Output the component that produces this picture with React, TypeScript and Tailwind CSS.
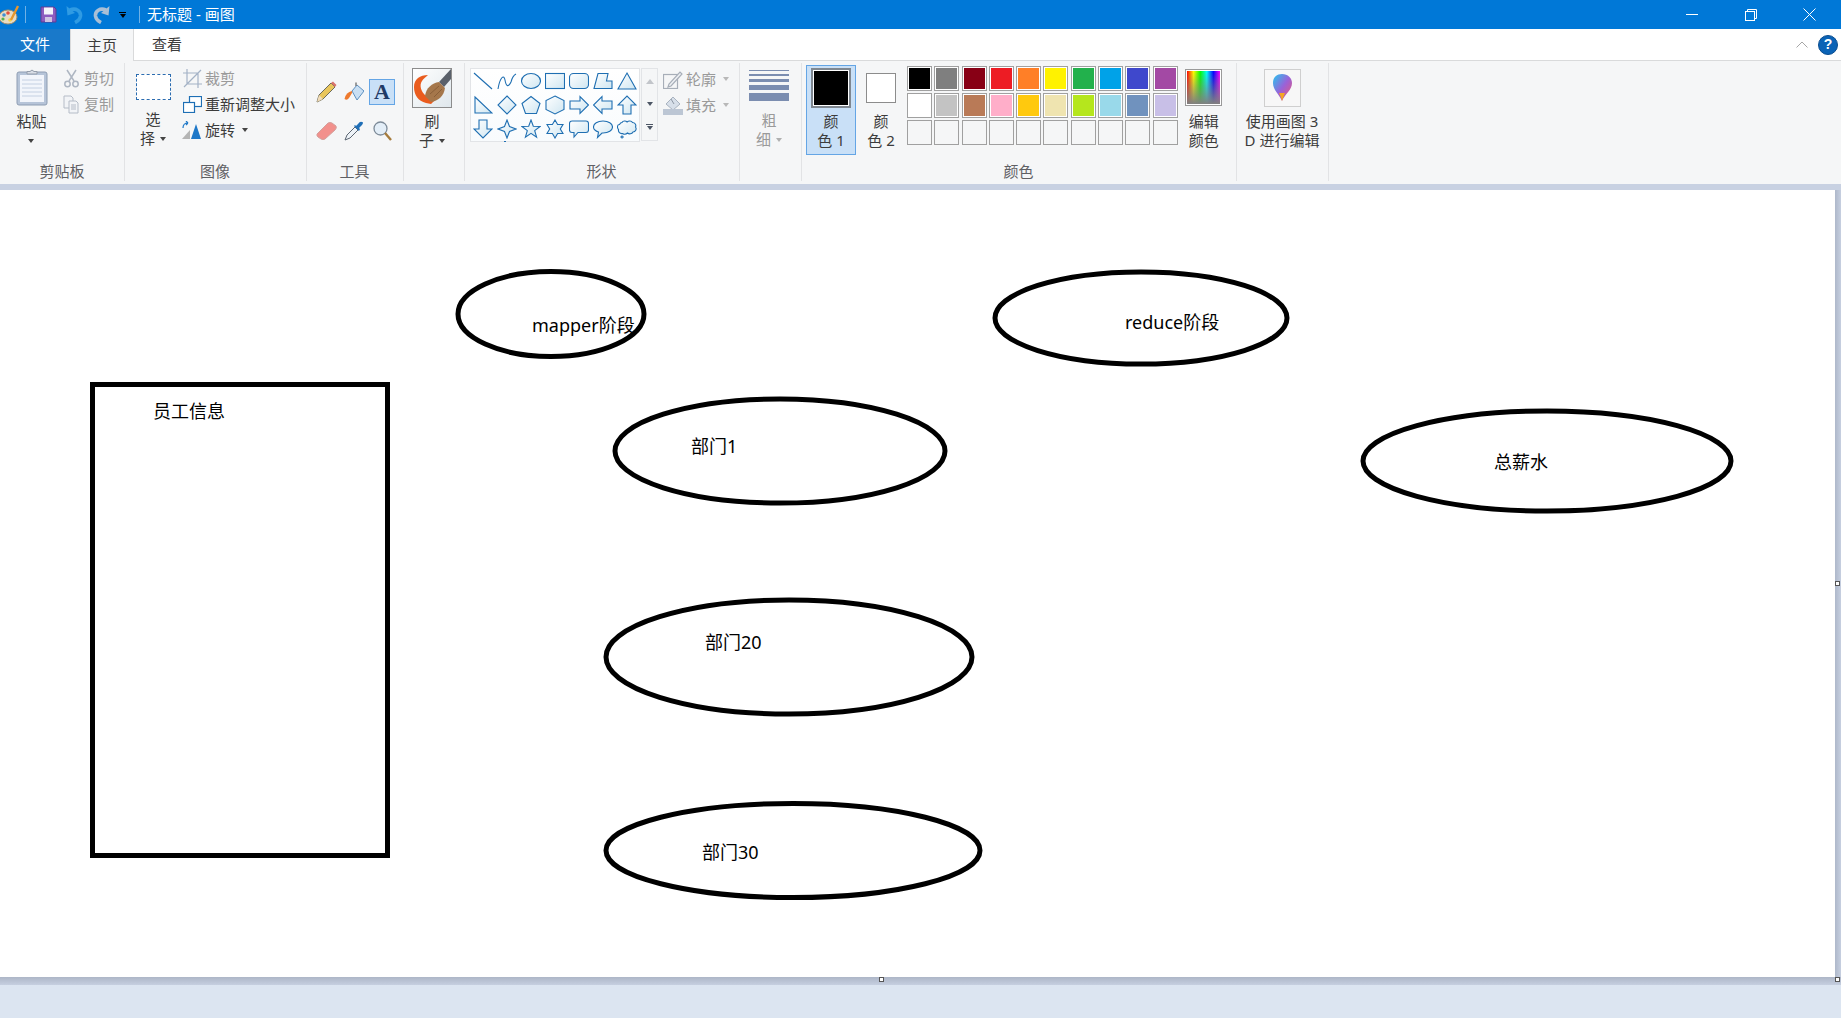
import type { ReactNode } from 'react';

const uiFont = "font-['Noto_Sans','Noto_Sans_CJK_SC',sans-serif]";

const paletteRows = [
  'bg-[#000000] bg-[#7f7f7f] bg-[#880015] bg-[#ed1c24] bg-[#ff7f27] bg-[#fff200] bg-[#22b14c] bg-[#00a2e8] bg-[#3f48cc] bg-[#a349a4]',
  'bg-[#ffffff] bg-[#c3c3c3] bg-[#b97a57] bg-[#ffaec9] bg-[#ffc90e] bg-[#efe4b0] bg-[#b5e61d] bg-[#99d9ea] bg-[#7092be] bg-[#c8bfe7]',
];

const shapes: ReactNode[] = [
  <path d="M1 2 L19 18" />,
  <path d="M1 18 C3 6 7 3 8 9 C9 15 11 17 14 11 C15 7 17 4 19 3" />,
  <ellipse cx="10" cy="10" rx="9.5" ry="7.5" />,
  <rect x="0.5" y="2.5" width="19" height="15" />,
  <rect x="0.5" y="2.5" width="19" height="15" rx="4" />,
  <path d="M5 2.5 H15 L13.5 10 H19 V17.5 H1 Z" />,
  <path d="M10 2 L19 18 H1 Z" />,
  <path d="M2 2 L19 18 H2 Z" />,
  <path d="M10 1 L19 10 L10 19 L1 10 Z" />,
  <path d="M10 1.5 L19 8.5 L15.5 18.5 H4.5 L1 8.5 Z" />,
  <path d="M10 1 L19 5.5 V14.5 L10 19 L1 14.5 V5.5 Z" />,
  <path d="M1 6 H11 V1.5 L19.5 10 L11 18.5 V14 H1 Z" />,
  <path d="M19 6 H9 V1.5 L0.5 10 L9 18.5 V14 H19 Z" />,
  <path d="M6 19 V10 H1 L10 1 L19 10 H14 V19 Z" />,
  <path d="M6 1 V10 H1 L10 19 L19 10 H14 V1 Z" />,
  <path d="M10 1 L12.5 7.5 L19 10 L12.5 12.5 L10 19 L7.5 12.5 L1 10 L7.5 7.5 Z" />,
  <path d="M10 1 L12.3 7.3 L19 7.5 L13.7 11.6 L15.6 18.2 L10 14.4 L4.4 18.2 L6.3 11.6 L1 7.5 L7.7 7.3 Z" />,
  <path d="M10 1 L12.6 5.5 H18 L15.3 10 L18 14.5 H12.6 L10 19 L7.4 14.5 H2 L4.7 10 L2 5.5 H7.4 Z" />,
  <path d="M3 2 H17 Q19.5 2 19.5 4.5 V11 Q19.5 13.5 17 13.5 H9 L5 18 V13.5 H3 Q0.5 13.5 0.5 11 V4.5 Q0.5 2 3 2 Z" />,
  <path d="M10 2 C15.5 2 19.5 4.5 19.5 8 C19.5 11.5 15.5 14 10 14 L9 14 L4.5 18.5 L5.5 13 C2.5 12 0.5 10.2 0.5 8 C0.5 4.5 4.5 2 10 2 Z" />,
  <path d="M5 3.5 C6 1.5 9 1.5 10 3 C11.5 1.5 14.5 1.5 15.5 3.5 C18 3.5 19.5 6 18.5 8 C20 10 18.5 13 16 13 C15 15 12 15.5 10.5 14 C9 15.5 7 15.5 5.5 14.5 C3 15 1 13 1.5 10.5 C0 9 0 5.5 2.5 5.5 C3 4.5 4 3.5 5 3.5 Z M5 17 a1 1 0 1 0 0.1 0 Z" />,
];

function Caret({ className = 'border-t-[#444]' }: { className?: string }) {
  return <span className={`inline-block w-0 h-0 border-x-[3.5px] border-x-transparent border-t-[4px] ${className}`} />;
}

function Group({ width, label, children }: { width: string; label: string; children: ReactNode }) {
  return (
    <section className={`${width} shrink-0 flex flex-col shadow-[1px_0_0_#e2e3e5]`}>
      <div className="flex-1 flex min-h-0">{children}</div>
      <div className="h-5 flex items-center justify-center text-[15px] leading-5 text-[#5f6064]">{label}</div>
    </section>
  );
}

function TwoLines({ top, bottom, muted }: { top: string; bottom: ReactNode; muted?: boolean }) {
  return (
    <div className={`flex flex-col items-center text-[15px] leading-[19px] ${muted ? 'text-[#9a9a9a]' : 'text-[#3c3c3c]'}`}>
      <span className="whitespace-nowrap">{top}</span>
      <span className="whitespace-nowrap min-h-[19px] flex items-center gap-[5px]">{bottom}</span>
    </div>
  );
}

function SmallAction({ icon, label, muted, caret }: { icon: ReactNode; label: string; muted?: boolean; caret?: boolean }) {
  return (
    <div className="flex items-center gap-[3px] h-[26px]">
      <span className="w-5 h-5 flex items-center justify-center shrink-0">{icon}</span>
      <span className={`text-[15px] whitespace-nowrap ${muted ? 'text-[#9a9a9a]' : 'text-[#3c3c3c]'}`}>{label}</span>
      {caret && <span className="ml-[4px] flex"><Caret className={muted ? 'border-t-[#b8b8b8]' : 'border-t-[#444]'} /></span>}
    </div>
  );
}

function AppIcon() {
  return (
    <svg width="20" height="20" viewBox="0 0 20 20">
      <ellipse cx="8" cy="12" rx="9" ry="7" fill="#e8dcc4" stroke="#a58f6c" />
      <circle cx="4" cy="10" r="1.8" fill="#3f8fd6" />
      <circle cx="8" cy="8" r="1.8" fill="#e34f3e" />
      <circle cx="3" cy="14" r="1.6" fill="#58b24d" />
      <circle cx="10" cy="15" r="1.8" fill="#f4d04a" />
      <path d="M18 1 L11 15" stroke="#e8962c" strokeWidth="2.4" />
    </svg>
  );
}

function TitleBar() {
  return (
    <header className="h-[29px] shrink-0 bg-[#0078d7] flex items-center text-white">
      <span className="w-[20px] flex"><AppIcon /></span>
      <span className="ml-[5px] w-px h-[17px] bg-[#6fb1e6]" />
      <svg className="ml-[14px]" width="17" height="17" viewBox="0 0 17 17">
        <path d="M1 1 H14 L16 3 V16 H1 Z" fill="#8d5cc0" stroke="#5e3d92" />
        <rect x="4" y="1.5" width="9" height="7" fill="#f4f4fb" />
        <rect x="5" y="11" width="7" height="5" fill="#cfc4e3" />
      </svg>
      <svg className="ml-[9px]" width="17" height="19" viewBox="0 0 17 19" fill="none">
        <path d="M4 5 C10 2.5 15 6 14.5 11 C14 14 12 16 9 17.5" stroke="#2f9be3" strokeWidth="3.6" />
        <path d="M0.5 1 L1.5 10.5 L9 8 Z" fill="#2f9be3" />
      </svg>
      <svg className="ml-[10px]" width="17" height="19" viewBox="0 0 17 19" fill="none">
        <path d="M13 5 C7 2.5 2 6 2.5 11 C3 14 5 16 8 17.5" stroke="#a9bfd6" strokeWidth="3.6" />
        <path d="M16.5 1 L15.5 10.5 L8 8 Z" fill="#a9bfd6" />
      </svg>
      <span className="ml-[9px] flex flex-col items-center gap-[1px]">
        <span className="w-[7px] h-px bg-black" />
        <Caret className="border-t-black" />
      </span>
      <span className="ml-[13px] w-px h-[17px] bg-[#6fb1e6]" />
      <span className="ml-[7px] text-[15px] leading-none whitespace-nowrap">无标题 - 画图</span>
      <div className="ml-auto flex items-center h-full pr-[3px]">
        <div className="w-[59px] flex justify-center">
          <span className="w-3 h-px bg-white" />
        </div>
        <div className="w-[59px] flex justify-center">
          <svg width="12" height="12" viewBox="0 0 12 12" fill="none" stroke="#fff">
            <rect x="0.5" y="2.5" width="9" height="9" />
            <path d="M2.5 2.5 V0.5 H11.5 V9.5 H9.5" />
          </svg>
        </div>
        <div className="w-[58px] flex justify-center">
          <svg width="13" height="13" viewBox="0 0 13 13" stroke="#fff">
            <path d="M0.5 0.5 L12.5 12.5 M12.5 0.5 L0.5 12.5" />
          </svg>
        </div>
      </div>
    </header>
  );
}

function TabRow() {
  return (
    <div className="h-[31px] shrink-0 bg-white flex items-stretch text-[15px] relative">
      <div className="w-[70px] bg-[#1979ca] text-white flex items-center justify-center">文件</div>
      <div className="w-[64px] bg-[#f5f6f7] border-x border-[#d9dadb] text-[#3c3c3c] flex items-center justify-center -mb-px z-10">主页</div>
      <div className="w-[66px] text-[#3c3c3c] flex items-center justify-center">查看</div>
      <div className="ml-auto flex items-center pr-[3px] gap-[10px]">
        <svg width="12" height="7" viewBox="0 0 12 7" fill="none" stroke="#a6a6a6">
          <path d="M0.5 6.5 L6 1 L11.5 6.5" />
        </svg>
        <span className="w-5 h-5 rounded-full bg-[#0b63b6] border border-[#0a4d8f] text-white text-[14px] font-bold flex items-center justify-center font-['Liberation_Sans',sans-serif]">?</span>
      </div>
    </div>
  );
}

function ClipboardGroup() {
  return (
    <Group width="w-[124px]" label="剪贴板">
      <div className="w-[63px] pt-[6px] flex flex-col items-center">
        <svg width="32" height="37" viewBox="0 0 32 37">
          <rect x="1" y="3" width="30" height="33" rx="2" fill="#b6c4d8" stroke="#8e9db3" />
          <rect x="4" y="6" width="24" height="27" fill="#f2f5fb" />
          <path d="M6 11 H26 M6 15 H26 M6 19 H26 M6 23 H26 M6 27 H26" stroke="#c4d0e2" />
          <path d="M11 5 V2.5 H14 Q16 -0.5 18 2.5 H21 V5 Z" fill="#d8dde6" stroke="#949dab" />
        </svg>
        <div className="mt-[6px]">
          <TwoLines top="粘贴" bottom={<Caret />} />
        </div>
      </div>
      <div className="pt-[2px] flex flex-col -ml-[2px]">
        <SmallAction muted label="剪切" icon={
          <svg width="15" height="19" viewBox="0 0 15 19" fill="none" stroke="#aeb6c2" strokeWidth="1.5">
            <path d="M3 1 L10 12 M12 1 L5 12" />
            <circle cx="3.5" cy="15" r="2.7" />
            <circle cx="11.5" cy="15" r="2.7" />
          </svg>
        } />
        <SmallAction muted label="复制" icon={
          <svg width="16" height="19" viewBox="0 0 16 19" fill="#f2f4f7" stroke="#b5bcc7">
            <path d="M1 1 H8 L10 3 V13 H1 Z" />
            <path d="M6 6 H13 L15 8 V18 H6 Z" />
            <path d="M8 10 H13 M8 12 H13 M8 14 H13" />
          </svg>
        } />
      </div>
    </Group>
  );
}

function ImageGroup() {
  return (
    <Group width="w-[182px]" label="图像">
      <div className="w-[58px] pt-[11px] flex flex-col items-center">
        <div className="w-[35px] h-[26px] border border-dashed border-[#2b6cb0] bg-white" />
        <div className="mt-[10px]">
          <TwoLines top="选" bottom={<>择<Caret /></>} />
        </div>
      </div>
      <div className="pt-[2px] flex flex-col">
        <SmallAction muted label="裁剪" icon={
          <svg width="19" height="19" viewBox="0 0 19 19" fill="none" stroke="#a4b2c6" strokeWidth="1.2">
            <path d="M4 0 V15 H19 M0 4 H15 V19 M18 1 L1 18" />
          </svg>
        } />
        <SmallAction label="重新调整大小" icon={
          <svg width="19" height="17" viewBox="0 0 19 17">
            <rect x="6.5" y="0.5" width="12" height="10" fill="#fff" stroke="#1e6fb5" strokeWidth="1.2" />
            <rect x="0.5" y="6.5" width="11" height="10" fill="#fff" stroke="#1e6fb5" strokeWidth="1.2" />
          </svg>
        } />
        <SmallAction label="旋转" caret icon={
          <svg width="20" height="19" viewBox="0 0 20 19">
            <path d="M0 18 L8 18 L8 9 Z" fill="#b4b4b4" />
            <path d="M14 3 L19 18 L9 18 Z" fill="#1e78c8" />
            <path d="M1 7 C1 3 3 2 6 2 M6 2 L4 0 M6 2 L4 4" fill="none" stroke="#1e78c8" strokeWidth="1.2" />
          </svg>
        } />
      </div>
    </Group>
  );
}

function ToolsGroup() {
  return (
    <Group width="w-[97px]" label="工具">
      <div className="pl-[6px] pt-[9px] grid grid-cols-[28px_28px_28px] grid-rows-[39px_39px] place-items-center">
        <svg width="21" height="22" viewBox="0 0 21 22">
          <path d="M1 21 L3 14 L15 2 L19 6 L7 18 Z" fill="#e9c65c" stroke="#6b6b5c" />
          <path d="M15 2 L17 0.5 L20.5 4 L19 6 Z" fill="#d9746d" />
          <path d="M1 21 L3 14 L7 18 Z" fill="#f1dcb8" />
        </svg>
        <svg width="20" height="20" viewBox="0 0 20 20">
          <path d="M8 9 L13 3 L20 9 L13 18 Z" fill="#c9dff3" stroke="#5d90c0" />
          <path d="M12 4 V0.5" stroke="#7c7c7c" strokeWidth="1.5" />
          <path d="M8 9 Q2 10 0.5 17 Q3 19 5 16 L8 11 Z" fill="#ee7a2f" />
        </svg>
        <div className="w-[26px] h-[26px] bg-[#c9e0f7] border border-[#64a5e5] flex items-center justify-center font-['Liberation_Serif',serif] font-bold text-[22px] leading-none text-[#1f3a66]">A</div>
        <svg width="21" height="20" viewBox="0 0 21 20">
          <path d="M1 13 L12 2 Q14 1 16 2 L20 5 Q21 7 19 9 L9 18 Q7 19 5 18 L2 16 Q0.5 15 1 13 Z" fill="#f2908c" stroke="#d3a09c" />
        </svg>
        <svg width="20" height="20" viewBox="0 0 20 20">
          <path d="M1 19 L3 14 L11 6 L14 9 L6 17 Z" fill="#eef3f8" stroke="#5c6672" />
          <path d="M10 5 L15 10 L16 8 L15 7 L18 4 Q20 1 18 1 Q16 0 14 3 L12 5 L11 4 Z" fill="#1f6fb7" />
        </svg>
        <svg width="19" height="20" viewBox="0 0 19 20">
          <circle cx="7.5" cy="7.5" r="6.5" fill="#e3eef8" stroke="#7d8b99" strokeWidth="1.3" />
          <path d="M12 12 L18 19" stroke="#a67c3d" strokeWidth="2.4" />
        </svg>
      </div>
    </Group>
  );
}

function BrushGroup() {
  return (
    <Group width="w-[61px]" label="">
      <div className="w-full pr-[3px] pt-[5px] flex flex-col items-center">
        <svg width="40" height="40" viewBox="0 0 40 40">
          <defs>
            <linearGradient id="brushBg" x1="0" y1="0" x2="1" y2="1">
              <stop offset="0" stopColor="#ffffff" />
              <stop offset="1" stopColor="#dfe7ec" />
            </linearGradient>
          </defs>
          <rect x="0.5" y="0.5" width="39" height="39" fill="url(#brushBg)" stroke="#8c8c8c" />
          <path d="M39 1 L27 14 L32 19 L39 11 Z" fill="#59606a" />
          <path d="M16 7 C8 7 2 11 2 19 C2 27 6 33 14 35 L19 36 L24 31 L14 28 C9 24 7 17 10 13 C11 11 14 9 16 7 Z" fill="#ea5c1e" />
          <path d="M13 28 C14 20 20 15 27 14 L33 20 C32 28 26 33 19 34 Z" fill="#a5774b" />
          <path d="M18 26 L27 18 M22 29 L30 21" stroke="#8a5f38" strokeWidth="1" />
        </svg>
        <div className="mt-[4px]">
          <TwoLines top="刷" bottom={<>子<Caret /></>} />
        </div>
      </div>
    </Group>
  );
}

function ShapesGroup() {
  return (
    <Group width="w-[275px]" label="形状">
      <div className="pl-[6px] pt-[5px] flex items-start">
        <div className="relative w-[170px] h-[74px] border border-[#e2e4e7] bg-[linear-gradient(180deg,#ffffff,#f8fbfd)] grid grid-cols-7 grid-rows-3">
          <svg width="0" height="0" className="absolute">
            <defs>
              <linearGradient id="shapeFill" x1="0" y1="0" x2="1" y2="1">
                <stop offset="0" stopColor="#ffffff" />
                <stop offset="1" stopColor="#cfe6f1" />
              </linearGradient>
            </defs>
          </svg>
          {shapes.map((shape, i) => (
            <div key={i} className="flex items-center justify-center">
              <svg width="20" height="20" viewBox="0 0 20 20" fill={i < 2 ? 'none' : 'url(#shapeFill)'} stroke="#1f6fb2" strokeWidth="1.1">
                {shape}
              </svg>
            </div>
          ))}
          <span className="absolute left-[33px] bottom-[-1px] w-[2px] h-px bg-[#1f6fb2]" />
        </div>
        <div className="ml-px w-[17px] h-[73px] border border-[#e2e4e7] flex flex-col items-center justify-between py-[10px]">
          <span className="w-0 h-0 border-x-[4px] border-x-transparent border-b-[5px] border-b-[#c2c5ca]" />
          <Caret className="border-t-[#4c5564]" />
          <span className="flex flex-col items-center gap-[1px]">
            <span className="w-[7px] h-px bg-[#4c5564]" />
            <Caret className="border-t-[#4c5564]" />
          </span>
        </div>
        <div className="ml-[5px] -mt-[2px] flex flex-col">
          <SmallAction muted label="轮廓" caret icon={
            <svg width="20" height="19" viewBox="0 0 20 19" fill="none" stroke="#a7aeb8" strokeWidth="1.2">
              <rect x="0.5" y="4.5" width="14" height="14" />
              <path d="M6 14 L5 17 L8 16 L19 4 L17 2 Z" fill="#eef0f3" />
            </svg>
          } />
          <SmallAction muted label="填充" caret icon={
            <svg width="20" height="19" viewBox="0 0 20 19">
              <path d="M10 1 L17 8 L10 14 L3 8 Z" fill="#d7dfe9" stroke="#a9b3c0" />
              <path d="M8 3 L11 8" stroke="#8d97a4" />
              <rect x="0" y="13" width="20" height="6" fill="#bcc6d4" />
            </svg>
          } />
        </div>
      </div>
    </Group>
  );
}

function SizeGroup() {
  return (
    <Group width="w-[62px]" label="">
      <div className="pl-[10px] pt-[7px] flex flex-col">
        <div className="w-10 flex flex-col gap-[3px]">
          <span className="h-px bg-[#7b8db0]" />
          <span className="h-[2px] bg-[#7b8db0]" />
          <span className="h-[3px] bg-[#7b8db0]" />
          <span className="h-[5px] bg-[#7b8db0]" />
          <span className="h-2 bg-[#7b8db0]" />
        </div>
        <div className="mt-[10px]">
          <TwoLines muted top="粗" bottom={<>细<Caret className="border-t-[#b0b0b0]" /></>} />
        </div>
      </div>
    </Group>
  );
}

function ColorsGroup() {
  return (
    <Group width="w-[435px]" label="颜色">
      <div className="pl-[5px] pt-[2px] flex items-start">
        <div className="w-[50px] h-[90px] bg-[#c9e0f7] border border-[#64a5e5] flex flex-col items-center pt-[2px]">
          <div className="w-10 h-10 border-2 border-[#7f8790] p-px bg-white">
            <div className="w-full h-full bg-black" />
          </div>
          <div className="mt-[4px]">
            <TwoLines top="颜" bottom="色 1" />
          </div>
        </div>
        <div className="w-[50px] h-[90px] flex flex-col items-center pt-2">
          <div className="w-[30px] h-[30px] border border-[#8c8c8c] bg-white" />
          <div className="mt-[9px]">
            <TwoLines top="颜" bottom="色 2" />
          </div>
        </div>
        <div className="ml-px pt-px grid grid-cols-[repeat(10,25px)] gap-y-[2px] gap-x-[2.3px]">
          {paletteRows.flatMap((row, r) =>
            row.split(' ').map((cls, c) => (
              <div key={`${r}-${c}`} className="w-[25px] h-[25px] border border-[#a0a0a0] p-px bg-white">
                <div className={`w-full h-full ${cls}`} />
              </div>
            ))
          )}
          {Array.from({ length: 10 }).map((_, i) => (
            <div key={i} className="w-[25px] h-[25px] border border-[#a0a0a0] bg-[#f5f6f7]" />
          ))}
        </div>
        <div className="w-[50px] ml-px pt-[4px] flex flex-col items-center">
          <svg width="37" height="37" viewBox="0 0 37 37">
            <defs>
              <linearGradient id="rainbow" x1="0" y1="0" x2="1" y2="0">
                <stop offset="0" stopColor="#ff0000" />
                <stop offset="0.2" stopColor="#ffff00" />
                <stop offset="0.4" stopColor="#00ff00" />
                <stop offset="0.6" stopColor="#00ffff" />
                <stop offset="0.8" stopColor="#0000ff" />
                <stop offset="1" stopColor="#ff00ff" />
              </linearGradient>
              <linearGradient id="rainbowFade" x1="0" y1="0" x2="0" y2="1">
                <stop offset="0" stopColor="#808080" stopOpacity="0" />
                <stop offset="1" stopColor="#808080" stopOpacity="1" />
              </linearGradient>
            </defs>
            <rect x="0.5" y="0.5" width="36" height="36" fill="#fff" stroke="#9a9a9a" />
            <rect x="2" y="2" width="33" height="33" fill="url(#rainbow)" />
            <rect x="2" y="2" width="33" height="33" fill="url(#rainbowFade)" />
          </svg>
          <div className="mt-[6px]">
            <TwoLines top="编辑" bottom="颜色" />
          </div>
        </div>
      </div>
    </Group>
  );
}

function Paint3dGroup() {
  return (
    <Group width="w-[92px]" label="">
      <div className="w-full pt-[6px] flex flex-col items-center">
        <svg width="37" height="38" viewBox="0 0 37 38">
          <defs>
            <linearGradient id="dropFill" x1="0" y1="0" x2="1" y2="1">
              <stop offset="0" stopColor="#22c8f0" />
              <stop offset="0.5" stopColor="#9a62d8" />
              <stop offset="1" stopColor="#f0566e" />
            </linearGradient>
          </defs>
          <rect x="0.5" y="0.5" width="36" height="37" fill="#f7f7f7" stroke="#cfcfcf" />
          <path d="M18 32 C15 25 9 21 9 14 C9 8 13 5 18 5 C24 5 28 9 28 14 C28 21 21 25 18 32 Z" fill="url(#dropFill)" />
          <path d="M18 32 C17 28 16 26 15 24 L21 24 C20 26 19 29 18 32 Z" fill="#f5a623" />
        </svg>
        <div className="mt-[5px]">
          <TwoLines top="使用画图 3" bottom="D 进行编辑" />
        </div>
      </div>
    </Group>
  );
}

function Ribbon() {
  return (
    <div className="h-[124px] shrink-0 bg-[#f5f6f7] border-t border-[#d9dadb] pt-[2px] pb-[3px] flex">
      <ClipboardGroup />
      <ImageGroup />
      <ToolsGroup />
      <BrushGroup />
      <ShapesGroup />
      <SizeGroup />
      <ColorsGroup />
      <Paint3dGroup />
    </div>
  );
}

function Drawing() {
  return (
    <div className="relative w-[1835px] h-full bg-white text-[18px] leading-6 text-black">
      <svg className="absolute inset-0" width="1835" height="787" fill="none" stroke="#000" strokeWidth="5">
        <rect x="92.5" y="194.5" width="295" height="471" strokeWidth="5" />
        <ellipse cx="551" cy="124" rx="93" ry="42.5" />
        <ellipse cx="1141" cy="128" rx="146" ry="46" />
        <ellipse cx="780" cy="261" rx="165" ry="52" />
        <ellipse cx="1547" cy="271" rx="184" ry="50" />
        <ellipse cx="789" cy="467" rx="183" ry="57" />
        <ellipse cx="793" cy="660.5" rx="187" ry="47" />
      </svg>
      <span className="absolute left-[153px] top-[209px]">员工信息</span>
      <span className="absolute left-[532px] top-[123px]">mapper阶段</span>
      <span className="absolute left-[1125px] top-[120px]">reduce阶段</span>
      <span className="absolute left-[691px] top-[244px]">部门1</span>
      <span className="absolute left-[1494px] top-[260px]">总薪水</span>
      <span className="absolute left-[705px] top-[440px]">部门20</span>
      <span className="absolute left-[702px] top-[650px]">部门30</span>
    </div>
  );
}

function Handle({ className }: { className: string }) {
  return <span className={`absolute w-[5px] h-[5px] bg-white border border-[#555] ${className}`} />;
}

function Workspace() {
  return (
    <main className="flex-1 min-h-0 bg-[#dce5f1] relative">
      <div className="h-[6px] bg-[#c8d1e2]" />
      <div className="h-[787px] flex">
        <Drawing />
        <div className="flex-1 bg-[linear-gradient(90deg,#aeb8ca,#c6cfe0)]" />
      </div>
      <div className="h-2 bg-[linear-gradient(180deg,#adb6c7,#c6cfe0)]" />
      <Handle className="left-[1835px] top-[397px]" />
      <Handle className="left-[879px] top-[793px]" />
      <Handle className="left-[1835px] top-[793px]" />
    </main>
  );
}

export default function App() {
  return (
    <div className={`h-screen w-full overflow-hidden flex flex-col bg-white ${uiFont}`}>
      <TitleBar />
      <TabRow />
      <Ribbon />
      <Workspace />
    </div>
  );
}
